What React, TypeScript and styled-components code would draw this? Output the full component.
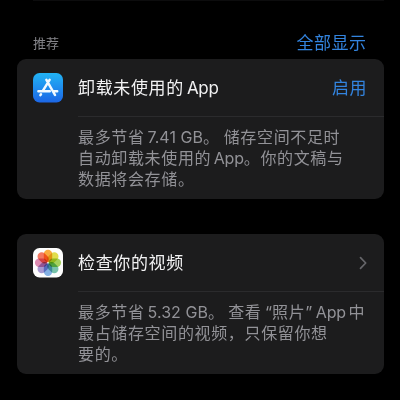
import React from "react";
import styled, { createGlobalStyle } from "styled-components";

const GlobalStyle = createGlobalStyle`
  body { margin: 0; background: #000; }
  * { box-sizing: border-box; }
`;

const Screen = styled.main`
  width: 400px;
  height: 400px;
  overflow: hidden;
  background: #000;
  padding: 0 16.5px;
  display: flex;
  flex-direction: column;
  font-family: Inter, "Noto Sans CJK SC", sans-serif;
  color: #f2f2f3;
`;

const PreviousEdge = styled.div`
  height: 1px;
  margin-left: 16px;
  background: #0c0c0d;
`;

const SectionHeader = styled.header`
  height: 58px;
  flex: none;
  padding: 0 17.5px 0 16.5px;
  display: flex;
  justify-content: space-between;
  align-items: flex-end;
`;

const SectionTitle = styled.h2`
  margin: 0 0 5px;
  font-size: 13px;
  line-height: 22px;
  font-weight: 400;
  color: #85858a;
`;

const Link = styled.a`
  font-size: 17px;
  line-height: 24px;
  letter-spacing: 0.5px;
  margin-right: -0.5px;
  color: #3384df;
`;

const HeaderLink = styled(Link)`
  margin-bottom: 4px;
`;

const Card = styled.section`
  height: 140px;
  flex: none;
  border-radius: 9px;
  background: #1c1c1d;
  & + & { margin-top: 35px; }
`;

const CardHead = styled.div`
  height: 57px;
  padding: 1px 17px 0 16px;
  display: flex;
  align-items: center;
`;

const CardTitle = styled.h3`
  flex: 1;
  margin: 0 0 0 15.5px;
  font-size: 17px;
  line-height: 24px;
  font-weight: 400;
  letter-spacing: 0.65px;
  white-space: nowrap;
`;

const CardBody = styled.div`
  margin-left: 61.5px;
  padding-top: 10px;
  border-top: 1px solid #2b2b2d;
  color: #929297;
`;

const Line = styled.div`
  height: 20.8px;
  line-height: 20.8px;
  font-size: 16px;
  letter-spacing: 0.65px;
  white-space: nowrap;
`;

const Latin = styled.span<{ $before?: number; $after?: number; $track?: number }>`
  margin-left: ${(p) => p.$before ?? 0}px;
  margin-right: ${(p) => p.$after ?? 0}px;
  letter-spacing: ${(p) => p.$track ?? 0}px;
`;

const Icon = styled.svg`
  flex: none;
  display: block;
`;

const Petal = styled.rect`
  mix-blend-mode: multiply;
`;

const AppStoreIcon = () => (
  <Icon width="30" height="30" viewBox="0 0 30 30">
    <defs>
      <linearGradient id="store" x1="0" y1="0" x2="0" y2="1">
        <stop offset="0" stopColor="#22b4f5" />
        <stop offset="1" stopColor="#1c66e6" />
      </linearGradient>
    </defs>
    <rect width="30" height="29.5" rx="6.5" fill="url(#store)" />
    <g stroke="#f3faff" strokeWidth="2.5" strokeLinecap="round" fill="none">
      <path d="M16.6 6.8 9.5 18.3M13.4 6.8 22 22M5.4 18.3H16.8M21 18.3H24.2M8 21.2 7.4 22.1" />
    </g>
  </Icon>
);

const PETALS = ["#fba024", "#dedb34", "#9acd48", "#66bda2", "#74a8e2", "#9c8ccd", "#da7ba8", "#f4664c"];

const PhotosIcon = () => (
  <Icon width="30" height="30" viewBox="0 0 30 30">
    <rect width="30" height="29.5" rx="6.5" fill="#fdfdfd" />
    {PETALS.map((color, i) => (
      <Petal
        key={color}
        x="10.8"
        y="1.7"
        width="8.4"
        height="12.4"
        rx="4.2"
        fill={color}
        fillOpacity="0.88"
        transform={`rotate(${i * 45} 15 14.8)`}
      />
    ))}
  </Icon>
);

const Chevron = () => (
  <Icon width="8" height="14" viewBox="0 0 8 14">
    <path d="M1.5 1.7 6.7 7 1.5 12.3" fill="none" stroke="#66666a" strokeWidth="1.7" strokeLinecap="round" strokeLinejoin="round" />
  </Icon>
);

export default function App() {
  return (
    <>
      <GlobalStyle />
      <Screen>
        <PreviousEdge />
        <SectionHeader>
          <SectionTitle>推荐</SectionTitle>
          <HeaderLink>全部显示</HeaderLink>
        </SectionHeader>
        <Card>
          <CardHead>
            <AppStoreIcon />
            <CardTitle>
              卸载未使用的<Latin $before={3} $track={-0.3}>App</Latin>
            </CardTitle>
            <Link>启用</Link>
          </CardHead>
          <CardBody>
            <Line>
              最多节省<Latin $before={3} $track={0.05}>7.41 GB</Latin>。<Latin $before={4} />储存空间不足时
            </Line>
            <Line>
              自动卸载未使用的<Latin $before={2.5} $track={-0.2}>App</Latin>。你的文稿与
            </Line>
            <Line>数据将会存储。</Line>
          </CardBody>
        </Card>
        <Card>
          <CardHead>
            <PhotosIcon />
            <CardTitle>检查你的视频</CardTitle>
            <Chevron />
          </CardHead>
          <CardBody>
            <Line>
              最多节省<Latin $before={3} $track={0.05}>5.32 GB</Latin>。<Latin $before={3.5} />查看<Latin $before={3.5}>“</Latin>照片
              <Latin $after={3.5}>”</Latin>
              <Latin $after={2.5} $track={-0.2}>App</Latin>中
            </Line>
            <Line>最占储存空间的视频，只保留你想</Line>
            <Line>要的。</Line>
          </CardBody>
        </Card>
      </Screen>
    </>
  );
}
